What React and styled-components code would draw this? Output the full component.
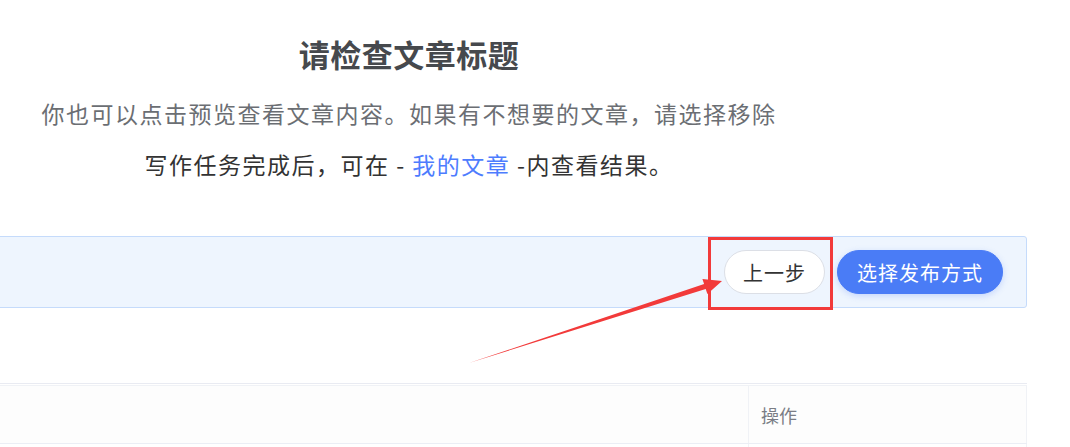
import React from "react";
import styled, { createGlobalStyle } from "styled-components";

const GlobalStyle = createGlobalStyle`
  html, body {
    margin: 0;
    padding: 0;
    background: #fff;
    overflow: hidden;
  }
  body {
    font-family: "Noto Sans CJK SC", "Noto Sans", sans-serif;
  }
`;

export default function App() {
  return (
    <Screen>
      <GlobalStyle />
      <Page>
        <Intro>
          <Title>请检查文章标题</Title>
          <Hint>你也可以点击预览查看文章内容。如果有不想要的文章，请选择移除</Hint>
          <Note>
            写作任务完成后，可在 - <Link>我的文章</Link> -内查看结果。
          </Note>
        </Intro>

        <ActionBar>
          <PillButton>上一步</PillButton>
          <PillButton primary>选择发布方式</PillButton>
        </ActionBar>

        <Table>
          <HeadRow>
            <HeadCell />
            <HeadCell narrow>操作</HeadCell>
          </HeadRow>
          <BodyRow>
            <BodyCell />
            <BodyCell narrow />
          </BodyRow>
        </Table>
      </Page>

      <Annotation width="1070" height="447" viewBox="0 0 1070 447">
        <rect x="709.5" y="238.5" width="122" height="70" fill="none" stroke="#f23a3a" strokeWidth="3" />
        <polygon
          points="469,363 705.7,288.9 707.4,294.1 722,281 702.4,278.9 704.1,284.1"
          fill="#f23a3a"
        />
      </Annotation>
    </Screen>
  );
}

const Screen = styled.div`
  position: relative;
  width: 1070px;
  height: 447px;
  overflow: hidden;
`;

const Page = styled.div`
  width: 1236px;
  margin-left: -209px;
  padding-top: 32px;
`;

const Intro = styled.div`
  display: flex;
  flex-direction: column;
  align-items: center;
`;

const Title = styled.h2`
  margin: 0 0 12px;
  font-size: 31px;
  line-height: 44px;
  font-weight: 700;
  letter-spacing: 0.5px;
  color: #46494d;
`;

const Hint = styled.p`
  margin: 0;
  font-size: 23px;
  line-height: 51px;
  letter-spacing: 1.5px;
  color: #6b6e73;
`;

const Note = styled(Hint)`
  color: #333;
`;

const Link = styled.a`
  color: #4d7cfe;
  cursor: pointer;
`;

const ActionBar = styled.div`
  margin-top: 46px;
  height: 70px;
  display: flex;
  align-items: center;
  justify-content: flex-end;
  gap: 12px;
  padding-right: 23px;
  background: #eef5fe;
  border: 1px solid #c5dbfb;
  border-radius: 3px;
`;

const PillButton = styled.button`
  height: 44px;
  padding: 0 ${(p) => (p.primary ? "19px" : "18px")};
  border-radius: 22px;
  border: 1px solid ${(p) => (p.primary ? "#4a7cf6" : "#dcdfe6")};
  background: ${(p) => (p.primary ? "#4a7cf6" : "#fff")};
  color: ${(p) => (p.primary ? "#fff" : "#333")};
  box-shadow: ${(p) => (p.primary ? "0 2px 6px rgba(74,124,246,0.25)" : "none")};
  font-family: "Noto Sans CJK SC", sans-serif;
  font-size: 20px;
  letter-spacing: 1px;
  cursor: pointer;
`;

const Table = styled.div`
  margin-top: 75px;
  border-top: 1px solid #e9ebf2;
`;

const HeadRow = styled.div`
  display: flex;
  margin-top: 1px;
  height: 57px;
  border-top: 1px solid #f0f2f6;
  border-bottom: 1px solid #ebeef5;
  background: #fdfdfd;
`;

const HeadCell = styled.div`
  flex: ${(p) => (p.narrow ? "0 0 279px" : "1")};
  display: flex;
  align-items: center;
  padding-left: 12px;
  box-sizing: border-box;
  border-left: ${(p) => (p.narrow ? "1px solid #f0f2f6" : "none")};
  border-right: ${(p) => (p.narrow ? "1px solid #f0f2f6" : "none")};
  font-size: 18px;
  color: #7a7d85;
`;

const BodyRow = styled.div`
  display: flex;
  height: 60px;
`;

const BodyCell = styled(HeadCell)`
  background: #fff;
`;

const Annotation = styled.svg`
  position: absolute;
  top: 0;
  left: 0;
  pointer-events: none;
`;
